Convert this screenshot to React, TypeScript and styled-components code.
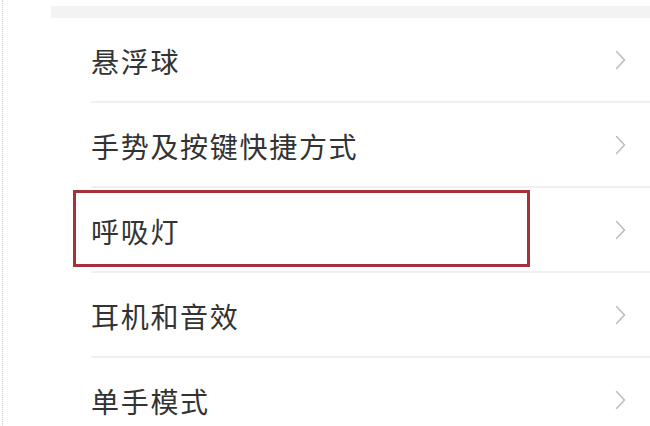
import styled, { createGlobalStyle } from "styled-components";

const GlobalStyle = createGlobalStyle`
  html, body {
    margin: 0;
    padding: 0;
    background: #ffffff;
  }
  body {
    font-family: "Noto Sans CJK SC", "Noto Sans", sans-serif;
  }
`;

const Page = styled.div`
  position: relative;
  width: 650px;
  height: 426px;
  overflow: hidden;
  background: #ffffff;
  border-left: 1px dotted #d4d4d4;
  margin-left: 2px;
  box-sizing: border-box;
`;

const SectionGap = styled.div`
  margin: 6px 0 0 48px;
  height: 12px;
  background: #f3f3f3;
`;

const List = styled.ul`
  list-style: none;
  margin: 0;
  padding: 0 0 0 88px;
`;

const Row = styled.li`
  position: relative;
  display: flex;
  align-items: center;
  justify-content: space-between;
  height: 83px;
  padding-right: 26px;
  border-bottom: 2px solid #f0f0f0;
`;

const Label = styled.span`
  font-size: 28px;
  color: #333333;
  letter-spacing: 1.7px;
  padding-top: 3px;
`;

const Highlight = styled.div`
  position: absolute;
  left: -18px;
  top: 2px;
  width: 451px;
  height: 71px;
  border: 3px solid #a7303a;
  pointer-events: none;
`;

const Chevron = () => (
  <svg width="11" height="20" viewBox="0 0 11 20" fill="none">
    <polyline
      points="1.5,1.5 9.5,10 1.5,18.5"
      stroke="#bdbdbd"
      strokeWidth="1.6"
      strokeLinecap="round"
      strokeLinejoin="round"
    />
  </svg>
);

const items = ["悬浮球", "手势及按键快捷方式", "呼吸灯", "耳机和音效", "单手模式"];

export default function App() {
  return (
    <>
      <GlobalStyle />
      <Page>
        <SectionGap />
        <List>
          {items.map((item) => (
            <Row key={item}>
              {item === "呼吸灯" && <Highlight />}
              <Label>{item}</Label>
              <Chevron />
            </Row>
          ))}
        </List>
      </Page>
    </>
  );
}
